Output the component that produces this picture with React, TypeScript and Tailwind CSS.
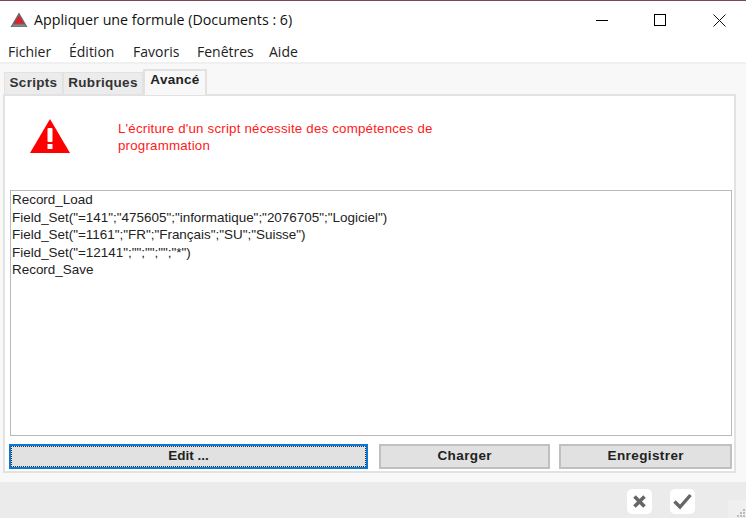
const lines = [
  'Record_Load',
  'Field_Set("=141";"475605";"informatique";"2076705";"Logiciel")',
  'Field_Set("=1161";"FR";"Français";"SU";"Suisse")',
  'Field_Set("=12141";"";"";"";"*")',
  'Record_Save',
];

function Tab({ label, active, w }: { label: string; active?: boolean; w: string }) {
  return active ? (
    <div className={`${w} relative z-10 -mb-px h-[26px] bg-[#f8f8f8] border-2 border-b-0 border-[#e2e2e2] text-center text-[13.5px] font-bold leading-[18px] text-[#222] tracking-[0.3px]`}>
      {label}
    </div>
  ) : (
    <div className={`${w} h-[22px] bg-[#ececec] border border-b-0 border-[#e2e2e2] text-center text-[13.5px] font-bold leading-[19px] text-[#333] tracking-[0.3px]`}>
      {label}
    </div>
  );
}

export default function App() {
  return (
    <div className="flex h-[518px] w-[746px] flex-col overflow-hidden bg-white font-['Liberation_Sans',sans-serif]">
      <div className="h-px bg-[#7a4a50]" />
      {/* title bar */}
      <div className="flex h-[38px] items-center pl-[10px] font-['Open_Sans',sans-serif]">
        <svg width="18" height="16" viewBox="0 0 18 16" className="mr-[6px]">
          <polygon points="9,0.5 17.5,15 0.5,15" fill="#666" />
          <polygon points="9,3.5 14,11.5 4,11.5" fill="#e2202c" />
          <rect x="2.5" y="12.5" width="13" height="2" fill="#888" />
        </svg>
        <span className="text-[14.25px] text-[#111]">Appliquer une formule (Documents : 6)</span>
        <div className="ml-auto flex items-center">
          <div className="flex w-[52px] justify-center">
            <div className="h-px w-3 bg-black" />
          </div>
          <div className="flex w-[64px] justify-center">
            <div className="size-3 border border-black" />
          </div>
          <div className="flex w-[54px] justify-center">
            <svg width="13" height="13" viewBox="0 0 13 13">
              <path d="M0.5 0.5 L12.5 12.5 M12.5 0.5 L0.5 12.5" stroke="#111" strokeWidth="1" fill="none" />
            </svg>
          </div>
        </div>
      </div>
      {/* menu */}
      <div className="flex h-[23px] items-center pl-2 pt-[1px] font-['Open_Sans',sans-serif] text-[14px] text-[#222]">
        <span className="w-[61px]">Fichier</span>
        <span className="w-[64px]">Édition</span>
        <span className="w-[64px]">Favoris</span>
        <span className="w-[72px]">Fenêtres</span>
        <span>Aide</span>
      </div>
      {/* content */}
      <div className="flex h-[420px] flex-col border-t-2 border-[#f0f0f0] bg-[#f8f8f8] pl-[3px] pr-[10px]">
        <div className="flex h-[30px] items-end pl-px">
          <Tab label="Scripts" w="w-[59px]" />
          <Tab label="Rubriques" w="w-[80px]" />
          <Tab label="Avancé" w="w-[64px]" active />
        </div>
        <div className="flex h-[379px] flex-col border-2 border-[#e2e2e2] bg-white pl-[5px] pr-[2px]">
          <div className="flex h-[94px] shrink-0">
            <svg width="42" height="36" viewBox="0 0 42 36" className="ml-[19px] mt-[22px]">
              <polygon points="21,1 41,35 1,35" fill="#ff0000" />
              <rect x="18.5" y="10" width="5" height="14" rx="1" fill="#fff" />
              <rect x="18.5" y="26" width="5" height="5" fill="#fff" />
            </svg>
            <p className="ml-[47px] mt-[24px] w-[340px] text-[13.3px] leading-[17px] tracking-[0.2px] text-[#ff1a1a]">
              L'écriture d'un script nécessite des compétences de programmation
            </p>
          </div>
          <div className="h-[246px] shrink-0 border border-[#b9b9b9] bg-white pl-px text-[13.45px] leading-[17.5px] text-[#222]">
            {lines.map((l) => (
              <div key={l}>{l}</div>
            ))}
          </div>
          <div className="mt-[8px] flex text-[13.5px] font-bold text-[#222]">
            <button className="-ml-px h-[25px] w-[360px] border-2 border-[#0a78d7] bg-[#e1e1e1] outline-1 -outline-offset-3 outline-dotted outline-[#333]">
              Edit ...
            </button>
            <button className="ml-[11px] h-[25px] w-[172px] border-2 border-[#c0c0c0] bg-[#e1e1e1] tracking-[0.4px]">Charger</button>
            <button className="ml-[9px] h-[25px] w-[173px] border-2 border-[#c0c0c0] bg-[#e1e1e1] tracking-[0.4px]">Enregistrer</button>
          </div>
        </div>
      </div>
      {/* footer */}
      <div className="relative flex flex-1 items-start justify-end gap-[18px] bg-[#ebebeb] pr-[51px] pt-[7px]">
        <div className="flex size-[25px] items-center justify-center rounded-[5px] bg-white">
          <svg width="15" height="15" viewBox="0 0 15 15">
            <path d="M2.5 2.5 L12.5 12.5 M12.5 2.5 L2.5 12.5" stroke="#666" strokeWidth="3.6" fill="none" />
          </svg>
        </div>
        <div className="flex size-[25px] items-center justify-center rounded-[5px] bg-white">
          <svg width="21" height="17" viewBox="0 0 21 17">
            <path d="M2.5 8.5 L8 14 L18.5 2" stroke="#666" strokeWidth="3.4" fill="none" />
          </svg>
        </div>
        <svg width="18" height="18" viewBox="0 0 18 18" className="absolute bottom-0 right-0">
          <rect width="18" height="18" fill="#efefef" />
          <g fill="#bbb">
            <rect x="15" y="9" width="2" height="2" />
            <rect x="12" y="12" width="2" height="2" />
            <rect x="15" y="12" width="2" height="2" />
            <rect x="9" y="15" width="2" height="2" />
            <rect x="12" y="15" width="2" height="2" />
            <rect x="15" y="15" width="2" height="2" />
          </g>
        </svg>
      </div>
    </div>
  );
}
